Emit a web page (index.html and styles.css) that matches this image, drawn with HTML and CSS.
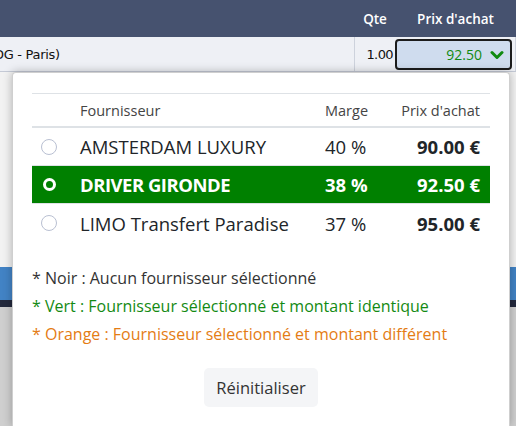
FILE: index.html
```html
<!DOCTYPE html>
<html lang="fr">
<head>
<meta charset="utf-8">
<title>Prix d'achat</title>
<link rel="stylesheet" href="styles.css">
</head>
<body>
<div class="page">
  <div class="thead">
    <div class="col-main"></div>
    <div class="col-qte">Qte</div>
    <div class="col-prix">Prix d'achat</div>
  </div>
  <div class="trow">
    <div class="col-main cell-text"><span class="clip">Transfert (CDG - Paris)</span></div>
    <div class="col-qte cell-num">1.00</div>
    <div class="col-prix cell-input">
      <div class="price-input">
        <span class="price-val">92.50</span>
        <svg class="chev" width="14" height="10" viewBox="0 0 14 10"><path d="M2 2.5 L7 7.5 L12 2.5" fill="none" stroke="#118a11" stroke-width="3" stroke-linecap="round" stroke-linejoin="round"/></svg>
      </div>
    </div>
  </div>
  <div class="below">
    <div class="b-light"></div>
    <div class="b-blue"></div>
    <div class="b-dark"></div>
    <div class="b-grey"></div>
  </div>
</div>

<div class="popup">
  <div class="tbl">
    <div class="tr th">
      <div class="td c-radio"></div>
      <div class="td c-name">Fournisseur</div>
      <div class="td c-marge">Marge</div>
      <div class="td c-price">Prix d'achat</div>
    </div>
    <div class="tr">
      <div class="td c-radio"><span class="radio"></span></div>
      <div class="td c-name">AMSTERDAM LUXURY</div>
      <div class="td c-marge">40 %</div>
      <div class="td c-price b">90.00 €</div>
    </div>
    <div class="tr sel">
      <div class="td c-radio"><span class="radio on"></span></div>
      <div class="td c-name">DRIVER GIRONDE</div>
      <div class="td c-marge">38 %</div>
      <div class="td c-price b">92.50 €</div>
    </div>
    <div class="tr">
      <div class="td c-radio"><span class="radio"></span></div>
      <div class="td c-name">LIMO Transfert Paradise</div>
      <div class="td c-marge">37 %</div>
      <div class="td c-price b">95.00 €</div>
    </div>
  </div>
  <div class="legend">
    <p class="l-black">* Noir : Aucun fournisseur sélectionné</p>
    <p class="l-green">* Vert : Fournisseur sélectionné et montant identique</p>
    <p class="l-orange">* Orange : Fournisseur sélectionné et montant différent</p>
  </div>
  <div class="actions">
    <button class="btn">Réinitialiser</button>
  </div>
</div>
</body>
</html>
```
FILE: styles.css
```css
* { box-sizing: border-box; }
html, body { margin: 0; padding: 0; }
body {
  width: 516px;
  height: 426px;
  overflow: hidden;
  position: relative;
  font-family: "Open Sans", "Noto Sans", sans-serif;
  background: #cfcfcf;
}
.page { display: flex; flex-direction: column; height: 426px; }
.thead {
  display: flex;
  height: 37px;
  background: #46526f;
  color: #fff;
  font-weight: 600;
  font-size: 13.5px;
  align-items: center;
}
.col-main { width: 355px; }
.col-qte { width: 40px; text-align: center; }
.col-prix { width: 121px; text-align: center; }
.trow {
  display: flex;
  height: 35px;
  background: #eef0f5;
  border-bottom: 1px solid #c5cad6;
  font-family: "DejaVu Sans", sans-serif;
  font-size: 13px;
  color: #111;
}
.cell-text {
  border-right: 1px solid #cdd2dc;
  overflow: hidden;
  white-space: nowrap;
  display: flex;
  align-items: center;
}
.clip { margin-left: -78px; letter-spacing: -0.3px; }
.cell-num {
  display: flex;
  align-items: center;
  justify-content: flex-end;
  padding-right: 2px;
  letter-spacing: -0.6px;
}
.cell-input {
  padding: 2px 4px 3px 0;
  border-right: 1px solid #cdd2dc;
}
.price-input {
  height: 31px;
  width: 117px;
  border: 2px solid #1c1c1c;
  border-radius: 4px;
  background: #cfdcee;
  display: flex;
  align-items: center;
  justify-content: flex-end;
  gap: 8px;
  padding-right: 6px;
  color: #118a11;
  font-family: "Open Sans", sans-serif;
  font-size: 14px;
}
.chev { display: block; }
.below { flex: 1; display: flex; flex-direction: column; }
.b-light { height: 195px; background: #f2f2f2; }
.b-blue { height: 33px; background: #4283c5; }
.b-dark { height: 7px; background: #23293d; }
.b-grey { flex: 1; background: #cfcfcf; }

.popup {
  position: absolute;
  left: 12px;
  top: 72px;
  width: 498px;
  height: 354px;
  background: #fff;
  border: 1px solid #cfcfcf;
  border-bottom: none;
  border-radius: 4px 4px 0 0;
  box-shadow: 0 0 10px rgba(0,0,0,0.28);
  padding: 20px 19px 0 19px;
  color: #212529;
}
.tbl { border-top: 1px solid #dee2e6; }
.tr {
  display: flex;
  align-items: center;
  height: 38px;
  border-bottom: 1px solid #dee2e6;
  font-size: 18.5px;
}
.tr:last-child { border-bottom: none; }
.tr.th {
  height: 34px;
  border-bottom: 2px solid #dee2e6;
  font-size: 14.5px;
  color: #444;
}
.td { white-space: nowrap; }
.c-radio { width: 48px; padding-left: 9px; display: flex; align-items: center; }
.c-name { width: 245px; }
.c-marge { width: 60px; }
.c-price { flex: 1; text-align: right; padding-right: 10px; }
.b { font-weight: 700; }
.tr.sel { background: #008000; color: #fff; font-weight: 700; }
.tr.sel .c-name { letter-spacing: -0.5px; }
.radio {
  width: 16px;
  height: 16px;
  border: 1px solid #b9c0d2;
  border-radius: 50%;
  background: #fff;
  display: block;
}
.radio.on {
  width: 13px;
  height: 13px;
  margin-left: 2px;
  border: 3px solid #fff;
  background: #008000;
}
.legend { padding-top: 22px; }
.legend p {
  margin: 0;
  height: 28px;
  line-height: 28px;
  font-size: 16px;
}
.l-black { color: #333; }
.l-green { color: #138a13; }
.l-orange { color: #e47c14; }
.actions { display: flex; justify-content: center; padding-top: 20px; }
.btn {
  font-family: "Open Sans", sans-serif;
  font-size: 16.5px;
  color: #333;
  background: #f4f5f7;
  border: none;
  border-radius: 5px;
  height: 39px;
  padding: 0 12px;
}
```
